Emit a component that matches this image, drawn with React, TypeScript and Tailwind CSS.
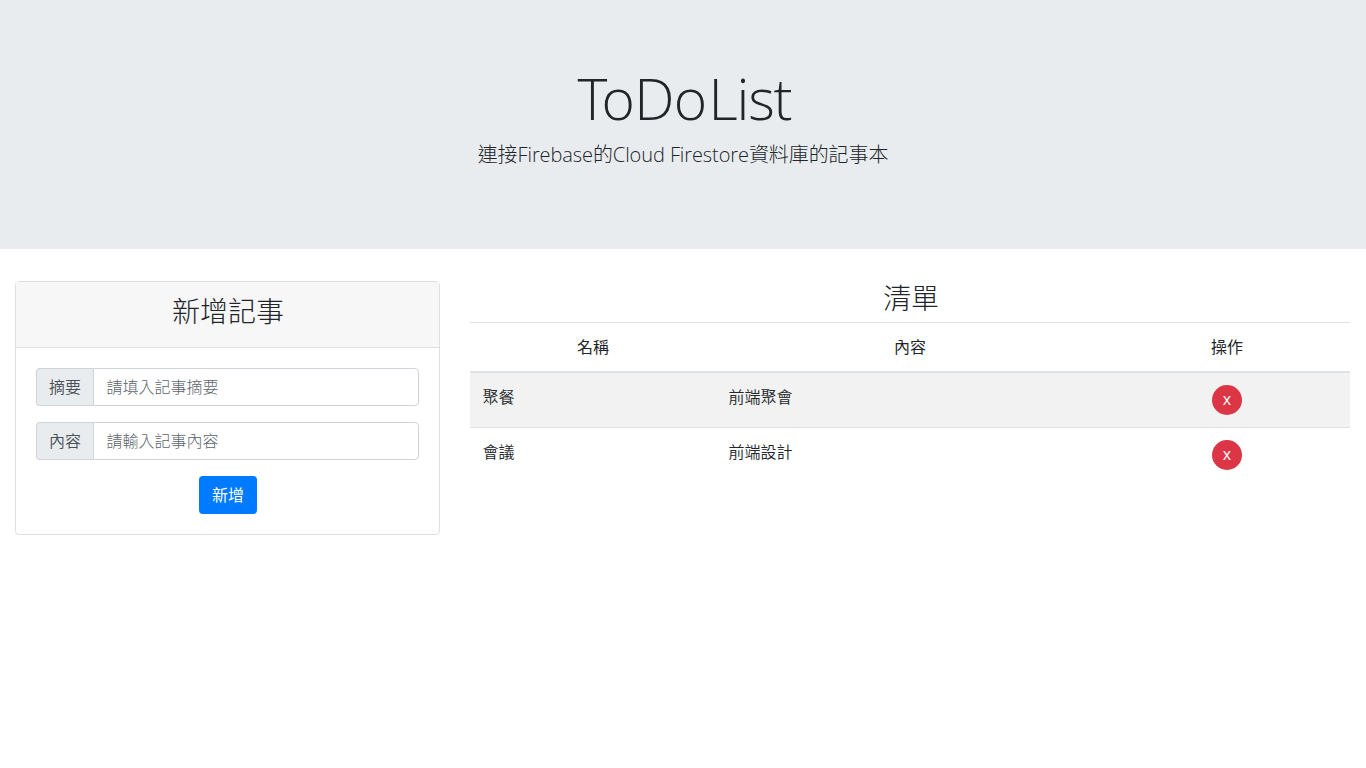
const rows = [
  { title: '聚餐', content: '前端聚會' },
  { title: '會議', content: '前端設計' },
];

function Field({ label, placeholder }: { label: string; placeholder: string }) {
  return (
    <div className="mb-4 flex h-[38px]">
      <span className="flex w-[57px] items-center rounded-l border border-r-0 border-[#ced4da] bg-[#e9ecef] pl-3 font-[350] text-[#495057]">
        {label}
      </span>
      <input
        type="text"
        placeholder={placeholder}
        className="min-w-0 flex-1 rounded-r border border-[#ced4da] bg-white px-[12.5px] pb-px font-light text-[#495057] placeholder:text-[#5c656d]"
      />
    </div>
  );
}

export default function App() {
  return (
    <div className="min-h-screen bg-white font-['Open_Sans','Noto_Sans_CJK_TC',sans-serif] text-base leading-6 font-[350] text-[#212529]">
      <header className="h-[249px] bg-[#e9ecef] pt-16 text-center">
        <h1 className="mb-2 pt-px pl-[3px] text-[57px] leading-[67px] font-light tracking-[-0.65px]">
          <span className="tracking-[-6px]">T</span>oDo<span className="pl-[2px] tracking-[-1.2px]">List</span>
        </h1>
        <p className="text-[20px] leading-[30px] font-light tracking-[-0.09px]">連接Firebase的Cloud Firestore資料庫的記事本</p>
      </header>
      <main className="flex items-start gap-[30px] px-[15px] pt-8">
        <section className="h-[254px] w-[425px] shrink-0 rounded border border-[#dfdfdf] bg-white">
          <div className="h-[66px] border-b border-[#dfdfdf] bg-[#f7f7f7] pt-3 pl-px text-center">
            <h2 className="text-[28px] leading-[34px] font-light">新增記事</h2>
          </div>
          <div className="p-5">
            <Field label="摘要" placeholder="請填入記事摘要" />
            <Field label="內容" placeholder="請輸入記事內容" />
            <div className="text-center">
              <button className="h-[38px] w-[58px] rounded bg-[#007bff] pl-px font-normal text-white">新增</button>
            </div>
          </div>
        </section>
        <section className="w-[880px] shrink-0">
          <h2 className="mb-[7px] pt-px pl-[2px] text-center text-[28px] leading-[33px] font-light">清單</h2>
          <table className="w-full table-fixed border-separate border-spacing-0">
            <colgroup>
              <col className="w-[246px]" />
              <col className="w-[388px]" />
              <col className="w-[246px]" />
            </colgroup>
            <thead>
              <tr className="h-[51px]">
                {['名稱', '內容', '操作'].map((heading) => (
                  <th key={heading} className="border-t border-b-2 border-[#dee2e6] p-0 pb-px font-normal">
                    {heading}
                  </th>
                ))}
              </tr>
            </thead>
            <tbody className="[&>tr:first-child]:h-[54px] [&>tr:last-child>td]:border-t">
              {rows.map((row) => (
                <tr key={row.title} className="h-[55px] odd:bg-[#f2f2f2]">
                  <td className="border-[#dee2e6] px-[12.5px] pt-3 pb-0 align-top">{row.title}</td>
                  <td className="border-[#dee2e6] px-[12.5px] pt-3 pb-0 align-top">{row.content}</td>
                  <td className="border-[#dee2e6] px-3 pt-3 pb-0 align-top">
                    <button className="mx-auto flex size-[30px] justify-center rounded-full bg-[#dc3545] text-base leading-[28px] font-normal text-white">x</button>
                  </td>
                </tr>
              ))}
            </tbody>
          </table>
        </section>
      </main>
    </div>
  );
}
